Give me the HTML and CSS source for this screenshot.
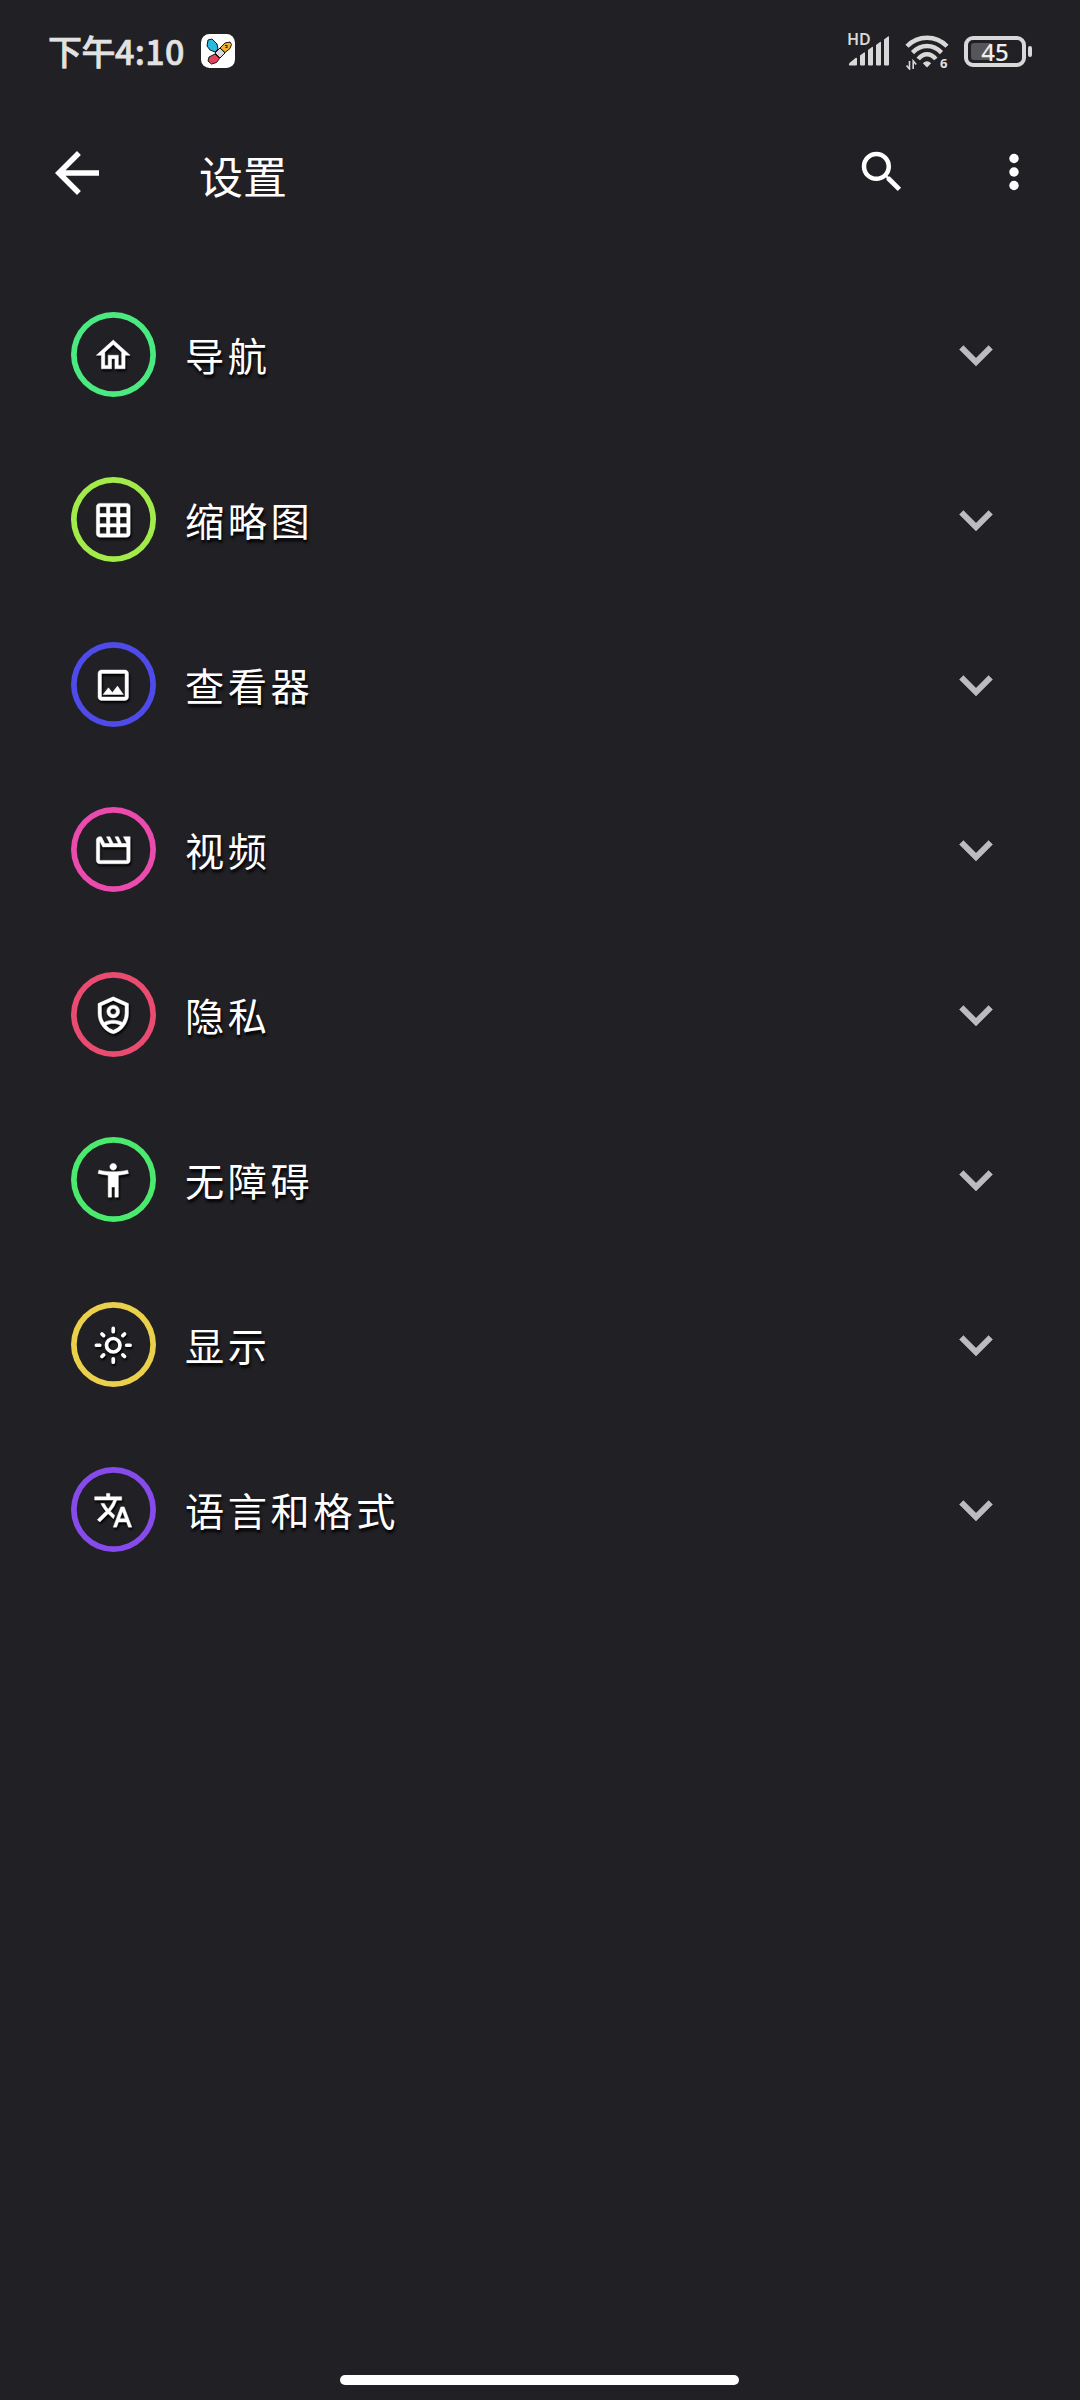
FILE: index.html
```html
<!DOCTYPE html>
<html lang="zh-CN">
<head>
<meta charset="utf-8">
<title>设置</title>
<link rel="stylesheet" href="styles.css">
</head>
<body>
<div class="screen">
  <div class="status">
    <span class="time"><span class="period">下午</span>4:10</span>
    <svg class="app-badge" width="34" height="34" viewBox="0 0 34 34">
      <rect width="34" height="34" rx="8.5" fill="#fff"/>
      <g stroke="#161616" stroke-width="1" stroke-linejoin="round">
        <path d="M7 6l4-1 5 5 1 5-3 3-5-2-3-4z" fill="#2bb9e2"/>
        <path d="M19 14l5-5 5-1 1.500 2.500-1.500 4-5 4z" fill="#f2b32c"/>
        <path d="M14 19l5-5 5 5-5 5z" fill="#d9d9d9"/>
        <path d="M14 20l4.500 4.500-3 4-5 1.500-3.500-3 1-4z" fill="#e0445c"/>
      </g>
      <path d="M24 11h2.500v3h-2v-1h1v-1h-1.500z" fill="#222"/>
    </svg>
    <div class="indicators">
      <div class="signal">
        <span class="hd">HD</span>
        <svg class="bars" width="42" height="42" viewBox="0 0 42 42">
          <path d="M1.500 33l6-5q1.500-1 1.500 1v5.500q0 1-1 1H2q-2 0-.5-2.500z"/>
          <path d="M12 25.500l4-3q1-.8 1 .8v11.200q0 1-1 1h-3q-1 0-1-1z"/>
          <path d="M20 20l4-3q1-.8 1 .8v16.700q0 1-1 1h-3q-1 0-1-1z"/>
          <path d="M28 15l4-3q1-.8 1 .8v21.700q0 1-1 1h-3q-1 0-1-1z"/>
          <path d="M36 9.500l4-3q1-.8 1 .8v27.200q0 1-1 1h-3q-1 0-1-1z"/>
        </svg>
      </div>
      <div class="wifi">
        <svg class="waves" width="44" height="36" viewBox="0 0 44 36">
          <path d="M2 12.200Q10.500 3.800 22 3.800T42 12.200"/>
          <path d="M7.500 18.600Q14 12 22 12T36.500 18.600"/>
          <path d="M13.200 25Q17 20.200 22 20.200T30.800 25"/>
          <path class="dot" d="M22 33.500l-4.200-4.200q4.200-4 8.400 0z"/>
          <path class="thin" d="M4.500 27v8L1.500 31.500M8.200 35v-8l3 3.500"/>
        </svg>
        <span class="six">6</span>
      </div>
      <div class="battery"><div class="cell"><div class="charge"></div><span class="pct">45</span></div><div class="nub"></div></div>
    </div>
  </div>

  <header class="bar">
    <svg class="back" width="66" height="66" viewBox="0 0 24 24"><path d="M20 11H7.830l5.590-5.590L12 4l-8 8 8 8 1.410-1.410L7.830 13H20v-2z"/></svg>
    <h1>设置</h1>
    <svg class="search" width="54" height="54" viewBox="0 0 24 24"><path d="M15.500 14h-.79l-.28-.27A6.471 6.471 0 0 0 16 9.500 6.500 6.500 0 1 0 9.500 16c1.610 0 3.090-.59 4.230-1.570l.27.28v.79l5 4.990L20.490 19l-4.990-5zm-6 0C7.010 14 5 11.990 5 9.500S7.010 5 9.500 5 14 7.010 14 9.500 11.990 14 9.500 14z"/></svg>
    <svg class="more" width="54" height="54" viewBox="0 0 24 24"><circle cx="12" cy="6" r="2.100"/><circle cx="12" cy="12" r="2.100"/><circle cx="12" cy="18" r="2.100"/></svg>
  </header>

  <main class="list">
    <div class="row"><span class="ring nav"><svg viewBox="0 0 24 24"><path d="M12 5.690l5 4.500V18h-2v-6H9v6H7v-7.810l5-4.500M12 3L2 12h3v8h6v-6h2v6h6v-8h3L12 3z"/></svg></span><span class="label">导航</span><svg class="chev" viewBox="0 0 24 24"><path d="M16.590 8.590L12 13.170 7.410 8.590 6 10l6 6 6-6z"/></svg></div>
    <div class="row"><span class="ring thumb"><svg viewBox="0 0 24 24"><path d="M20 2H4c-1.100 0-2 .9-2 2v16c0 1.100.9 2 2 2h16c1.100 0 2-.9 2-2V4c0-1.100-.9-2-2-2zM8 20H4v-4h4v4zm0-6H4v-4h4v4zm0-6H4V4h4v4zm6 12h-4v-4h4v4zm0-6h-4v-4h4v4zm0-6h-4V4h4v4zm6 12h-4v-4h4v4zm0-6h-4v-4h4v4zm0-6h-4V4h4v4z"/></svg></span><span class="label">缩略图</span><svg class="chev" viewBox="0 0 24 24"><path d="M16.590 8.590L12 13.170 7.410 8.590 6 10l6 6 6-6z"/></svg></div>
    <div class="row"><span class="ring viewer"><svg viewBox="0 0 24 24"><path d="M19 5v14H5V5h14m0-2H5c-1.100 0-2 .9-2 2v14c0 1.100.9 2 2 2h14c1.100 0 2-.9 2-2V5c0-1.100-.9-2-2-2zm-4.500 9.500l-3 3.860L9.140 13.500 6 17.500h12l-3.500-5z"/></svg></span><span class="label">查看器</span><svg class="chev" viewBox="0 0 24 24"><path d="M16.590 8.590L12 13.170 7.410 8.590 6 10l6 6 6-6z"/></svg></div>
    <div class="row"><span class="ring video"><svg viewBox="0 0 24 24"><path d="M18 4l2 4h-3l-2-4h-2l2 4h-3l-2-4H8l2 4H7L5 4H4c-1.100 0-1.990.9-1.990 2L2 18c0 1.100.9 2 2 2h16c1.100 0 2-.9 2-2V4h-4zm2 14H4V6.470L5.760 10H20v8z"/></svg></span><span class="label">视频</span><svg class="chev" viewBox="0 0 24 24"><path d="M16.590 8.590L12 13.170 7.410 8.590 6 10l6 6 6-6z"/></svg></div>
    <div class="row"><span class="ring privacy"><svg viewBox="0 0 24 24"><path fill-rule="evenodd" d="M12 1.100l9 4V11c0 5.550-3.840 10.740-9 12-5.160-1.260-9-6.450-9-12V5.100l9-4zm0 2.100L5 6.300V11c0 1.900.56 3.700 1.530 5.240C8.100 15.450 10 14.900 12 14.900s3.900.55 5.470 1.340A9.900 9.900 0 0 0 19 11V6.300l-7-3.100zm0 13.700c-1.500 0-3.100.4-4.270 1A9.200 9.200 0 0 0 12 20.930a9.200 9.200 0 0 0 4.270-3.030c-1.170-.6-2.770-1-4.270-1zM12 6a3.800 3.800 0 1 1 0 7.600A3.800 3.800 0 0 1 12 6zm0 2a1.800 1.800 0 1 0 0 3.600A1.800 1.800 0 0 0 12 8z"/></svg></span><span class="label">隐私</span><svg class="chev" viewBox="0 0 24 24"><path d="M16.590 8.590L12 13.170 7.410 8.590 6 10l6 6 6-6z"/></svg></div>
    <div class="row"><span class="ring access"><svg viewBox="0 0 24 24"><path d="M20.500 6c-2.610.7-5.670 1-8.500 1s-5.890-.3-8.500-1L3 8c1.860.5 4 .83 6 1v13h2v-6h2v6h2V9c2-.17 4.140-.5 6-1l-.5-2zM12 6c1.100 0 2-.9 2-2s-.9-2-2-2-2 .9-2 2 .9 2 2 2z"/></svg></span><span class="label">无障碍</span><svg class="chev" viewBox="0 0 24 24"><path d="M16.590 8.590L12 13.170 7.410 8.590 6 10l6 6 6-6z"/></svg></div>
    <div class="row"><span class="ring display"><svg viewBox="0 0 24 24"><g class="sun"><circle cx="12" cy="12" r="4"/><path d="M12 2v2M12 20v2M2 12h2M20 12h2M5.300 5.300l1 1M17.700 17.700l1 1M5.300 18.700l1-1M17.700 6.300l1-1"/></g></svg></span><span class="label">显示</span><svg class="chev" viewBox="0 0 24 24"><path d="M16.590 8.590L12 13.170 7.410 8.590 6 10l6 6 6-6z"/></svg></div>
    <div class="row"><span class="ring lang"><svg viewBox="0 0 24 24"><path d="M12.870 15.070l-2.540-2.510.03-.03A17.520 17.520 0 0 0 14.070 6H17V4h-7V2H8v2H1v1.990h11.170C11.500 7.920 10.440 9.750 9 11.350 8.070 10.320 7.300 9.190 6.690 8h-2c.73 1.630 1.730 3.170 2.980 4.560l-5.090 5.020L4 19l5-5 3.110 3.110.76-2.040zM18.500 10h-2L12 22h2l1.120-3h4.750L21 22h2l-4.500-12zm-2.620 7l1.620-4.330L19.120 17h-3.240z"/></svg></span><span class="label">语言和格式</span><svg class="chev" viewBox="0 0 24 24"><path d="M16.590 8.590L12 13.170 7.410 8.590 6 10l6 6 6-6z"/></svg></div>
  </main>

  <div class="home"></div>
</div>
</body>
</html>
```
FILE: styles.css
```css
* { box-sizing: border-box; }
body { margin: 0; background: #212025; color: #fff; font-family: "Noto Sans CJK SC", sans-serif; }
.screen { width: 1080px; height: 2400px; display: flex; flex-direction: column; overflow: hidden; }
svg { display: block; flex: none; fill: #fff; }

.status { height: 102px; display: flex; align-items: center; padding: 0 48px; color: #e2e2e2; }
.time { font-size: 34px; font-weight: 500; line-height: 50px; width: 153px; white-space: nowrap; letter-spacing: 0.400px; -webkit-text-stroke: 0.700px #e2e2e2; }
.period { letter-spacing: -0.500px; }
.app-badge { margin-top: -1px; }
.indicators { margin-left: auto; display: flex; align-items: center; }
.signal { position: relative; width: 42px; height: 42px; margin-right: 15px; margin-top: -1px; }
.bars { fill: #d8d8d8; }
.hd { position: absolute; left: -1px; top: 2px; font: 600 16px/14px "Noto Sans", sans-serif; color: #d8d8d8; }
.wifi { position: relative; width: 44px; height: 36px; margin: 1px 15px 0 0; }
.waves { fill: none; stroke: #d8d8d8; stroke-width: 4.400px; }
.waves .dot { fill: #d8d8d8; stroke: none; }
.waves .thin { stroke-width: 1.600px; }
.six { position: absolute; left: 35px; top: 22px; font: 700 13px/14px "Open Sans", sans-serif; }
.battery { display: flex; align-items: center; gap: 2px; }
.cell { position: relative; width: 62px; height: 31px; border: 4px solid #d8d8d8; border-radius: 9px; }
.charge { width: 20px; height: 17px; margin: 3px; background: #56555a; border-radius: 3px 0 0 3px; }
.pct { position: absolute; left: 0; right: 0; top: -1px; text-align: center; font: 500 24px/25px "Noto Sans", sans-serif; color: #eee; }
.nub { width: 4px; height: 11px; background: #d8d8d8; border-radius: 2px; }

.bar { height: 143px; display: flex; align-items: flex-start; padding: 38px 39px 0 44px; }
.bar h1 { margin: 2px 0 0 89px; font-size: 44px; line-height: 66px; font-weight: 400; flex: 1; }
.search { margin-top: 5px; }
.more { margin: 5px 0 0 78px; }

.list { flex: 1; padding-top: 27px; }
.row { height: 165px; display: flex; align-items: center; padding: 0 71.500px 0 71px; }
.ring { width: 85px; height: 85px; box-shadow: inset 0 0 0 5.700px currentColor; border-radius: 50%; display: flex; align-items: center; justify-content: center; flex: none; }
.ring svg { width: 40.500px; height: 40.500px; margin-top: 1px; stroke: #fff; stroke-width: 0.300px; filter: drop-shadow(1.500px 2px 0.800px #000); }
.sun { fill: none; stroke-width: 2.200px; stroke-linecap: round; }
.nav { color: #4bea80; }
.thumb { color: #a3ea4b; }
.viewer { color: #4f4bea; }
.video { color: #ea4bac; }
.privacy { color: #ea4b70; }
.access { color: #4bea6e; }
.display { color: #ead04b; }
.lang { color: #864bea; }
.label { margin: -1px 0 0 29px; flex: 1; font-size: 39.200px; letter-spacing: 3.600px; line-height: 58px; text-shadow: 1px 3px 3px #000; }
.chev { width: 66px; height: 66px; fill: #bcbcbe; stroke: #bcbcbe; stroke-width: 0.200px; }

.home { width: 399px; height: 10px; border-radius: 5px; background: #fff; margin: 0 0 15px 340px; }
```
